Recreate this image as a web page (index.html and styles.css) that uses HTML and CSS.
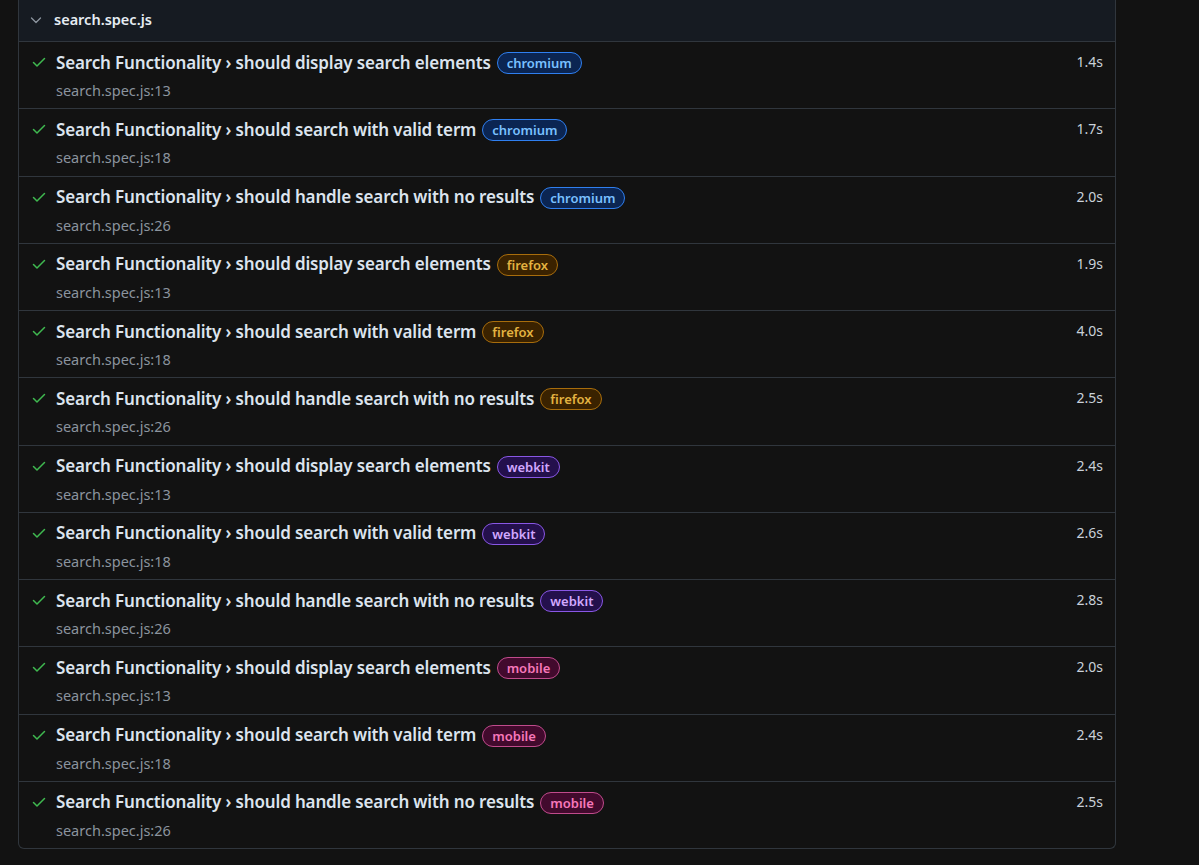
FILE: index.html
```html
<!DOCTYPE html>
<html lang="en">
<head>
<meta charset="utf-8">
<title>search.spec.js</title>
<link rel="stylesheet" href="styles.css">
</head>
<body>
<div class="file">
  <div class="file-header">
    <svg class="chevron" width="16" height="16" viewBox="0 0 16 16"><path d="M3.5 6 L8 10.5 L12.5 6" fill="none" stroke="currentColor" stroke-width="1.3" stroke-linecap="round" stroke-linejoin="round"/></svg>
    <span class="file-name">search.spec.js</span>
  </div>
  <div class="rows" id="rows"></div>
</div>
<script src="app.js"></script>
</body>
</html>
```
FILE: styles.css
```css
html, body {
  margin: 0;
  padding: 0;
  background: #121212;
}
body {
  font-family: "Noto Sans", "Open Sans", sans-serif;
  color: #c9d1d9;
  padding: 0 83px 0 18px;
}
.file {
  border: 1px solid #30363d;
  border-top: none;
  border-radius: 0 0 6px 6px;
  overflow: hidden;
}
.file-header {
  height: 42px;
  background: #161b22;
  border-bottom: 1px solid #30363d;
  display: flex;
  align-items: center;
  padding-left: 9px;
  padding-bottom: 3px;
  box-sizing: border-box;
}
.chevron {
  color: #8b949e;
  margin-right: 10px;
  margin-top: 1px;
}
.file-name {
  font-size: 14.5px;
  font-weight: 600;
  color: #e6edf3;
}
.row {
  display: grid;
  grid-template-columns: 25px 1fr auto;
  padding: 8px 12px 8.25px 12px;
  border-bottom: 1px solid #30363d;
}
.row:last-child { border-bottom: none; }
.check {
  color: #3fb950;
  height: 24px;
  display: flex;
  align-items: center;
}
.title-line {
  display: flex;
  align-items: center;
  height: 24px;
}
.title {
  font-size: 17px;
  font-weight: 600;
  color: #dce4ee;
  white-space: nowrap;
  letter-spacing: -0.15px;
}
.badge {
  margin-left: 6px;
  margin-top: 2px;
  height: 22px;
  box-sizing: border-box;
  border: 1px solid;
  border-radius: 11px;
  padding: 0 9px;
  font-size: 13px;
  font-weight: 600;
  line-height: 20px;
}
.badge.chromium { background: #0b2552; border-color: #2f7ff0; color: #79c0ff; }
.badge.firefox { background: #3a2200; border-color: #a86d0c; color: #e3b341; }
.badge.webkit { background: #24104c; border-color: #8957e5; color: #d2a8ff; }
.badge.mobile { background: #420a2d; border-color: #c04b8c; color: #f778ba; }
.location {
  margin-top: 6px;
  font-size: 14.5px;
  line-height: 20px;
  color: #8b949e;
}
.time {
  font-size: 14px;
  line-height: 24px;
  color: #c9d1d9;
}
```
FILE: app.js
```js
const tests = [
  ["should display search elements", "chromium", "13", "1.4s"],
  ["should search with valid term", "chromium", "18", "1.7s"],
  ["should handle search with no results", "chromium", "26", "2.0s"],
  ["should display search elements", "firefox", "13", "1.9s"],
  ["should search with valid term", "firefox", "18", "4.0s"],
  ["should handle search with no results", "firefox", "26", "2.5s"],
  ["should display search elements", "webkit", "13", "2.4s"],
  ["should search with valid term", "webkit", "18", "2.6s"],
  ["should handle search with no results", "webkit", "26", "2.8s"],
  ["should display search elements", "mobile", "13", "2.0s"],
  ["should search with valid term", "mobile", "18", "2.4s"],
  ["should handle search with no results", "mobile", "26", "2.5s"]
];
const rows = document.getElementById("rows");
const check = '<svg width="16" height="16" viewBox="0 0 16 16"><path d="M2.5 8.5 L6 12 L13.5 4.5" fill="none" stroke="currentColor" stroke-width="1.5" stroke-linecap="round" stroke-linejoin="round"/></svg>';
for (const [name, project, line, time] of tests) {
  const row = document.createElement("div");
  row.className = "row";
  row.innerHTML =
    '<div class="check">' + check + '</div>' +
    '<div class="content">' +
      '<div class="title-line"><span class="title">Search Functionality › ' + name + '</span>' +
      '<span class="badge ' + project + '">' + project + '</span></div>' +
      '<div class="location">search.spec.js:' + line + '</div>' +
    '</div>' +
    '<div class="time">' + time + '</div>';
  rows.appendChild(row);
}
```
